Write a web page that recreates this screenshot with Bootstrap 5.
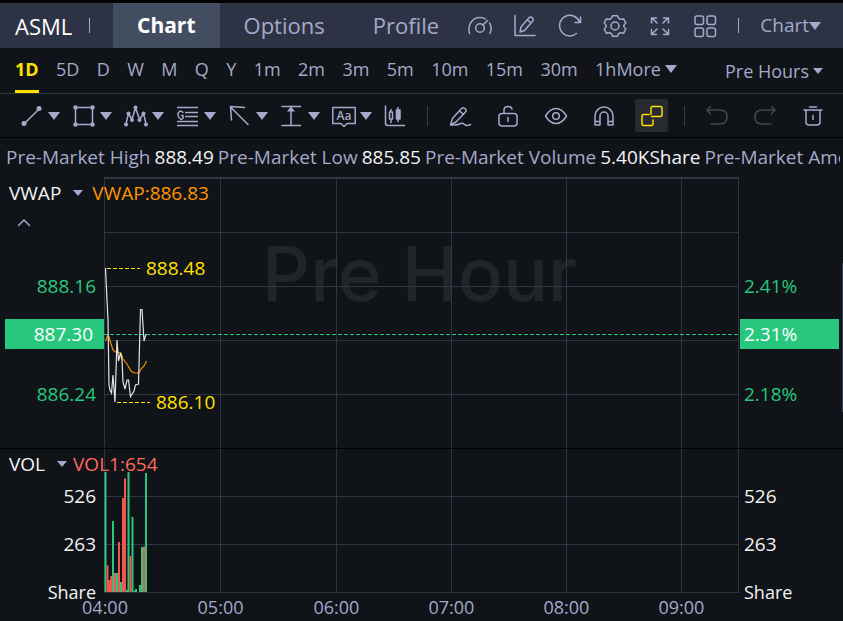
<!DOCTYPE html>
<html lang="en">
<head>
<meta charset="utf-8">
<meta name="viewport" content="width=device-width, initial-scale=1">
<title>ASML Chart</title>
<link href="https://cdn.jsdelivr.net/npm/bootstrap@5.3.0/dist/css/bootstrap.min.css" rel="stylesheet">
<style>
:root{--ink:#a5a9cb;--line:#2d3643;--bg:#101318;--up:#28c77e;--down:#f1564f;--yel:#ffe000}
body{background:var(--bg);color:var(--ink);font-family:"Open Sans","Noto Sans",sans-serif;font-size:19px;line-height:30px;overflow-x:hidden}
button,.nav-link{color:inherit}
.tool{background:none;border:0;padding:0;color:var(--ink);display:flex;align-items:center;justify-content:center;flex:none}
svg.ico{width:24px;height:24px;fill:none;stroke:currentColor;stroke-width:1.5;stroke-linecap:round;stroke-linejoin:round;flex:none}
svg.ico .solid{fill:currentColor;stroke:none}
.caret{display:inline-block;flex:none;border:6px solid transparent;border-top:8px solid var(--ink);border-bottom:0}
.caret-sm{border-width:5px;border-top-width:6px;border-bottom:0}
.topbar{background:#2d3344;border-top:3px solid #000;height:48px;font-size:22px}
.symbol{color:#fff;padding-left:15px;width:89px;flex:none}
.vsep{width:1px;height:15px;background:var(--ink);flex:none}
.dimsep{width:1px;height:20px;background:#333a48;flex:none;margin:0 8px}
.tabs{margin-left:23px}
.tabs .nav-link{padding:0 24px;line-height:45px;color:var(--ink)}
.tabs .nav-link:last-child{padding-right:8px}
.tabs .nav-link.active{background:#424e5f;color:#fff;font-weight:700;font-size:21px}
.top-tool{width:45px;height:45px}
.tools .vsep{margin-left:11px}
.menu{font-size:19px;line-height:45px;margin:0 22px 0 21px}
.periods{height:46px;border-bottom:1px solid var(--line);font-size:18px;padding-left:15px;padding-right:20px}
.periods .nav-link{padding:0;line-height:42px;height:45px}
.periods .nav button.nav-link{height:42px}
.periods .nav-link.active{color:var(--yel);font-weight:700;border-bottom:3px solid var(--yel)}
.drawbar{height:44px;border-bottom:1px solid #000;padding-left:20px}
.shapes{margin-right:11px}
.drop{width:52px;height:42px;justify-content:flex-start;gap:4px}
.draw{width:48px;height:42px}
.pick{background:#282a32;color:var(--yel);width:33px;height:33px;border-radius:3px;margin:0 8px 0 7px}
.dim{color:#454852}
.quotes{height:39px;line-height:39px;padding-left:6px;margin-right:3px;overflow:hidden;white-space:nowrap}
.quotes dl,.quotes dt,.quotes dd{margin:0;font-weight:400}
.quotes dl{gap:4px}
.quotes dd{color:#f4f4f4}
.panel{display:grid;grid-template-columns:104px minmax(0,1fr) 104px;position:relative}
.price{border-bottom:1px solid #000}
.axis{display:flex;flex-direction:column}
.axis.l{text-align:right}
.axis.r{padding-left:1px}
.axis span{padding:0 8px 0 4px}
.price .axis{padding-top:94px;color:var(--up)}
.price .axis .now{background:var(--up);color:#fff;margin-top:18px;margin-bottom:30px}
.axis.l .now{margin-left:5px;padding-right:11px}
.axis.r .now{margin-right:4px}
.volume .axis{padding-top:23px;line-height:48px;color:#f4f4f4}
.axis .unit{font-size:18px}
.plot{display:block;width:100%;overflow:visible;font-size:19px}
.price .plot{height:271px}
.volume .plot{height:144px}
.legend-row{position:absolute;left:9px;top:1px;gap:9px}
.legend-row .tool{color:#f4f4f4;gap:12px}
.volume .legend-row{top:0;gap:6px}
.vwap{color:#ff9500}
.vol1{color:#ff6a5c}
.fold{position:absolute;left:12px;top:34px;width:24px;height:24px}
.grid-lines{stroke:var(--line);shape-rendering:crispEdges}
.times{fill:var(--ink);text-anchor:middle;font-size:18px}
.water{font-family:Inter,sans-serif;font-size:75px;font-weight:500;fill:#212429;text-anchor:middle}
.thumb{position:absolute;right:0;top:86px;width:1px;height:149px;background:#35414f}
</style>
<script src="https://cdn.jsdelivr.net/npm/bootstrap@5.3.0/dist/js/bootstrap.bundle.min.js"></script>
</head>
<body>
<header class="topbar d-flex align-items-center">
  <span class="symbol">ASML</span><span class="vsep"></span>
  <nav class="nav tabs flex-nowrap" aria-label="Sections">
    <a class="nav-link active" href="#chart">Chart</a>
    <a class="nav-link" href="#options">Options</a>
    <a class="nav-link" href="#profile">Profile</a>
  </nav>
  <div class="tools d-flex ms-auto align-items-center">
    <button class="tool top-tool" aria-label="Speed"><svg class="ico" viewBox="0 0 24 24"><path d="M1.500 19.500C-1 10 5 3.500 12 3.500c2.500 0 4 .5 5.500 1.500M21.500 9c2 3 2 7 .5 10.500M19.500 6.500l-4.500 4.500"/><circle cx="12" cy="14" r="4.300"/></svg></button>
    <button class="tool top-tool" aria-label="Draw on chart"><svg class="ico" viewBox="0 0 24 24"><path d="M2 1.500v20h20M7 18l1-5L16 3.800q1.500-1.500 3.200 0t.3 3.400L11.500 16.500zM14.500 6l3.500 3"/></svg></button>
    <button class="tool top-tool" aria-label="Refresh"><svg class="ico" viewBox="0 0 24 24"><path d="M18.500 19.500A10.300 10.300 0 1 1 21.500 8M22.500 3v5.500H17"/></svg></button>
    <button class="tool top-tool" aria-label="Settings"><svg class="ico" viewBox="0 0 24 24"><path d="M9.500 1.700h5q.5 2.500 2 3.300t4-.3l2.300 4.300q-2 1.500-2 3t2 3l-2.300 4.300q-2.500-1-4-.3t-2 3.300h-5q-.5-2.500-2-3.300t-4 .3L1.200 15q2-1.500 2-3t-2-3l2.300-4.300q2.500 1 4 .3t2-3.300z"/><circle cx="12" cy="12" r="4"/></svg></button>
    <button class="tool top-tool" aria-label="Full screen"><svg class="ico" viewBox="0 0 24 24"><path d="M3.500 9V4h5M4 4l5 5M15.500 4h5v5M20 4l-5 5M3.500 15.500v5h5M4 20l5-5M15.500 20.500h5v-5M20 20l-5-5"/></svg></button>
    <button class="tool top-tool" aria-label="Layouts"><svg class="ico" viewBox="0 0 24 24"><rect x="2" y="2" width="8.500" height="8.500" rx="2"/><rect x="14" y="2" width="8.500" height="8.500" rx="2"/><rect x="2" y="14" width="8.500" height="8.500" rx="2"/><rect x="14" y="14" width="8.500" height="8.500" rx="2"/></svg></button>
    <span class="vsep"></span>
    <button class="tool menu">Chart<span class="caret"></span></button>
  </div>
</header>

<div class="periods d-flex">
  <nav class="nav flex-nowrap flex-fill justify-content-between" aria-label="Period">
    <a class="nav-link active" href="#1d">1D</a><a class="nav-link" href="#5d">5D</a><a class="nav-link" href="#d">D</a><a class="nav-link" href="#w">W</a><a class="nav-link" href="#m">M</a><a class="nav-link" href="#q">Q</a><a class="nav-link" href="#y">Y</a><a class="nav-link" href="#1m">1m</a><a class="nav-link" href="#2m">2m</a><a class="nav-link" href="#3m">3m</a><a class="nav-link" href="#5m">5m</a><a class="nav-link" href="#10m">10m</a><a class="nav-link" href="#15m">15m</a><a class="nav-link" href="#30m">30m</a>
    <span class="d-flex"><a class="nav-link" href="#1h">1h</a><button class="tool nav-link gap-1">More<span class="caret"></span></button></span>
  </nav>
  <button class="tool ms-5 gap-1">Pre Hours<span class="caret caret-sm"></span></button>
</div>

<div class="drawbar d-flex align-items-center">
  <div class="shapes d-flex align-items-center">
    <button class="tool drop" aria-label="Line"><svg class="ico" viewBox="0 0 24 24"><path d="M4 20L19 5"/><circle class="solid" cx="4" cy="19.500" r="2.500"/><circle class="solid" cx="19" cy="4.500" r="2.500"/></svg><span class="caret"></span></button>
    <button class="tool drop" aria-label="Shape"><svg class="ico" viewBox="0 0 24 24"><path d="M3.500 3.500h17v17h-17z"/><g class="solid"><circle cx="3.500" cy="3.500" r="2.200"/><circle cx="20.500" cy="3.500" r="2.200"/><circle cx="3.500" cy="20.500" r="2.200"/><circle cx="20.500" cy="20.500" r="2.200"/></g></svg><span class="caret"></span></button>
    <button class="tool drop" aria-label="Pattern"><svg class="ico" viewBox="0 0 24 24"><path d="M2 20L4.500 9.500 8 15.500 11.500 3.500 15.500 15.500 19.500 9.500 22 20"/><g class="solid"><circle cx="2" cy="20.500" r="2"/><circle cx="4.500" cy="9.500" r="2"/><circle cx="8" cy="16" r="2"/><circle cx="11.500" cy="3.500" r="2"/><circle cx="15.500" cy="16" r="2"/><circle cx="19.500" cy="9.500" r="2"/><circle cx="22" cy="20.500" r="2"/></g></svg><span class="caret"></span></button>
    <button class="tool drop" aria-label="Gann and Fibonacci"><svg class="ico" viewBox="0 0 24 24"><path stroke-linecap="butt" d="M1 3.500h21M9 8.500h13M9 12.500h13M1 17.500h21M1 21.500h21"/><path d="M7 8.500Q5 6 3 8t0 5.500 4 .5v-2.500H5.500"/></svg><span class="caret"></span></button>
    <button class="tool drop" aria-label="Arrow"><svg class="ico" viewBox="0 0 24 24"><path d="M20 20.500L2.500 3M16.500 3.500l-14-1 1 13.500"/></svg><span class="caret"></span></button>
    <button class="tool drop" aria-label="Measure"><svg class="ico" viewBox="0 0 24 24"><path d="M2 2.500h18.500M2 21.500h18.500M11 21V4"/><path class="solid" d="M11 2.500l4 5H7z"/></svg><span class="caret"></span></button>
    <button class="tool drop" aria-label="Text"><svg class="ico" viewBox="0 0 24 24"><path d="M.8 3.500h22.400v16H15l-3 3-3-3H.8z"/><text x="12" y="16" text-anchor="middle" font-size="12" font-weight="600" fill="currentColor" stroke="none">Aa</text></svg><span class="caret"></span></button>
    <button class="tool" aria-label="Candles"><svg class="ico" viewBox="0 0 24 24"><path d="M1.500 2v17q0 2.500 2.500 2.500H20.500M7 5.500v13M14 3.500v14"/><rect x="5.500" y="8" width="3" height="7" fill="#101318"/><rect x="12.500" y="6" width="3.500" height="9" fill="currentColor"/></svg></button>
  </div>
  <span class="dimsep"></span>
  <div class="d-flex align-items-center">
    <button class="tool draw" aria-label="Pen"><svg class="ico" viewBox="0 0 24 24"><path d="M2.500 21l2-6.500L13.500 4.500q1.500-1.500 3.500 0t.5 3.500L8 18zM11.500 7l4 3.500M2.500 21q6 .5 9-1t5 .5 6 0"/></svg></button>
    <button class="tool draw" aria-label="Unlock"><svg class="ico" viewBox="0 0 24 24"><rect x="3" y="9.500" width="18" height="12.500" rx="3"/><path d="M8 9V6q0-3.500 4-3.500 3.500 0 4 2.500M12 13.500v4"/></svg></button>
    <button class="tool draw" aria-label="Show"><svg class="ico" viewBox="0 0 24 24"><path d="M1.500 12Q6 4.500 12 4.500T22.500 12Q18 19.500 12 19.500T1.500 12z"/><circle cx="12" cy="12" r="3.300"/></svg></button>
    <button class="tool draw" aria-label="Magnet"><svg class="ico" viewBox="0 0 24 24"><path d="M3 21v-9a9 9 0 0 1 18 0v9h-5v-9a4 4 0 0 0-8 0v9zM3 17.500h5M16 17.500h5"/></svg></button>
    <button class="tool pick" aria-label="Linked drawings" aria-pressed="true"><svg class="ico" viewBox="0 0 24 24"><path d="M11 7V4q0-1.500 1.500-1.500h8q1.500 0 1.500 1.500v7q0 1.500-1.500 1.500H11.500M9 10.500H3.500Q2 10.500 2 12v8q0 1.500 1.500 1.500h8q1.500 0 1.500-1.500v-4M11 7v3.500"/></svg></button>
  </div>
  <span class="dimsep"></span>
  <div class="d-flex align-items-center">
    <button class="tool draw dim" aria-label="Undo"><svg class="ico" viewBox="0 0 24 24"><path d="M5.500 2.500L2 6l3.500 4M2.500 6H15q7 0 7 7t-7 7H6"/></svg></button>
    <button class="tool draw dim" aria-label="Redo"><svg class="ico" viewBox="0 0 24 24"><path d="M18.500 2.500L22 6l-3.500 4M21.500 6H9q-7 0-7 7t7 7h9"/></svg></button>
    <button class="tool draw" aria-label="Delete"><svg class="ico" viewBox="0 0 24 24"><path d="M3 6h18M8.500 3h7M5 6v12q0 3 3 3h8q3 0 3-3V6M12 11.500v4"/></svg></button>
  </div>
</div>

<div class="quotes"><dl class="d-flex"><dt>Pre-Market High</dt><dd>888.49</dd><dt>Pre-Market Low</dt><dd>885.85</dd><dt>Pre-Market Volume</dt><dd>5.40KShare</dd><dt>Pre-Market Amount</dt></dl></div>

<main>
<section class="panel price" aria-label="Price">
  <div class="axis l"><span>888.16</span><span class="now">887.30</span><span>886.24</span></div>
  <svg class="plot" role="img" aria-label="Price by minute">
    <text class="water" x="49.700%" y="124">Pre Hour</text>
    <g class="grid-lines">
      <path d="M.5 0V270"/><line x1="0" x2="100%" y1="1" y2="1" stroke-width="2"/>
      <line x1="0" x2="100%" y1="55.500" y2="55.500"/><line x1="0" x2="100%" y1="109.500" y2="109.500"/><line x1="0" x2="100%" y1="163.500" y2="163.500"/><line x1="0" x2="100%" y1="217.500" y2="217.500"/>
      <line x1="18.350%" x2="18.350%" y1="0" y2="270"/><line x1="36.610%" x2="36.610%" y1="0" y2="270"/><line x1="54.720%" x2="54.720%" y1="0" y2="270"/><line x1="72.830%" x2="72.830%" y1="0" y2="270"/><line x1="90.940%" x2="90.940%" y1="0" y2="270"/><line x1="99.920%" x2="99.920%" y1="0" y2="270"/>
    </g>
    <line x1="0" x2="100%" y1="157.500" y2="157.500" stroke="#28c77e" stroke-dasharray="4 2"/>
    <svg width="100%" height="271" viewBox="104 177 635 271" preserveAspectRatio="none" fill="none">
      <path stroke="#f09000" stroke-width="1.200" d="M105.500 341L107.500 336 109 337 111 344 113 350 115.500 352 121 353 123 359 127 364 131 371 134 373H139L141 369 144 366 146.500 361"/>
      <path stroke="#e4e4e4" stroke-width="1.200" d="M105.500 268L107 300 108 320 109 385 110 390 111.500 393 113 375 115 402 117 340 118.500 361 120.500 353 122 360 123 382 125 389 127 380H128.500L130.500 396.500 134 391 135.500 385 138.500 384 140.500 309.500H142L144 341 146 334"/>
    </svg>
    <g stroke="#ffe000" stroke-dasharray="4 2"><path d="M3 91.500H36M13 225.500H46"/></g>
    <g fill="#ffe000"><text x="42" y="98">888.48</text><text x="52" y="232">886.10</text></g>
  </svg>
  <div class="axis r"><span>2.41%</span><span class="now">2.31%</span><span>2.18%</span></div>
  <div class="legend-row d-flex"><button class="tool">VWAP<span class="caret caret-sm"></span></button><span class="vwap">VWAP:886.83</span></div>
  <button class="tool fold" aria-label="Collapse"><svg class="ico" viewBox="0 0 24 24"><path d="M6.500 14.500L12 9l5.500 5.500"/></svg></button>
  <div class="thumb"></div>
</section>

<section class="panel volume" aria-label="Volume">
  <div class="axis l"><span>526</span><span>263</span><span class="unit">Share</span></div>
  <svg class="plot" role="img" aria-label="Volume by minute">
    <g class="grid-lines">
      <path d="M.5 0V144"/><line x1="0" x2="100%" y1="47.500" y2="47.500"/><line x1="0" x2="100%" y1="95.500" y2="95.500"/><line x1="0" x2="100%" y1="143.500" y2="143.500"/>
      <line x1="18.350%" x2="18.350%" y1="0" y2="144"/><line x1="36.610%" x2="36.610%" y1="0" y2="144"/><line x1="54.720%" x2="54.720%" y1="0" y2="144"/><line x1="72.830%" x2="72.830%" y1="0" y2="144"/><line x1="90.940%" x2="90.940%" y1="0" y2="144"/><line x1="99.920%" x2="99.920%" y1="0" y2="144"/>
    </g>
    <svg width="100%" height="144" viewBox="104 449 635 144" preserveAspectRatio="none" fill="none" stroke-width="2">
      <path stroke="#28c77e" d="M105.500 592V472M113 592V521M117 592V573M121 592V582M126.500 592V590M128.500 592V472M132.500 592V517M134.500 592V591M136 592V589M140 592V585M142 592V547M146 592V473"/>
      <path stroke="#f1564f" d="M107.500 592V565.500M109.500 592V580M111.300 592V576M115 592V573M119 592V542M123 592V498M125 592V478.500M130.500 592V556M144 592V546.500"/>
    </svg>
    <g class="times"><text x="1" y="165">04:00</text><text x="18.350%" y="165">05:00</text><text x="36.610%" y="165">06:00</text><text x="54.720%" y="165">07:00</text><text x="72.830%" y="165">08:00</text><text x="90.940%" y="165">09:00</text></g>
  </svg>
  <div class="axis r"><span>526</span><span>263</span><span class="unit">Share</span></div>
  <div class="legend-row d-flex"><button class="tool">VOL<span class="caret caret-sm"></span></button><span class="vol1">VOL1:654</span></div>
</section>
</main>
</body>
</html>
